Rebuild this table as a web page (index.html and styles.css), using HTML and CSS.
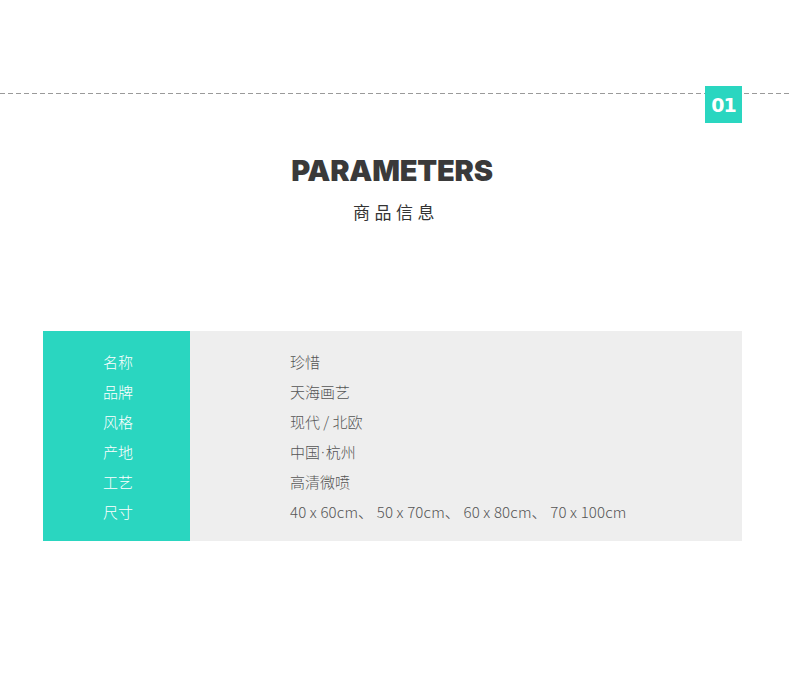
FILE: index.html
```html
<!DOCTYPE html>
<html lang="zh-CN">
<head>
<meta charset="utf-8">
<title>Parameters</title>
<link rel="stylesheet" href="styles.css">
</head>
<body>
<div class="page">
  <div class="rule">
    <div class="badge">01</div>
  </div>
  <div class="heading">
    <h1 class="title">PARAMETERS</h1>
    <p class="subtitle">商品信息</p>
  </div>
  <div class="table">
    <div class="labels">
      <div class="cell">名称</div>
      <div class="cell">品牌</div>
      <div class="cell">风格</div>
      <div class="cell">产地</div>
      <div class="cell">工艺</div>
      <div class="cell">尺寸</div>
    </div>
    <div class="values">
      <div class="cell">珍惜</div>
      <div class="cell">天海画艺</div>
      <div class="cell">现代 / 北欧</div>
      <div class="cell">中国<span class="dot">·</span>杭州</div>
      <div class="cell">高清微喷</div>
      <div class="cell sizes">40 x 60cm、 50 x 70cm、 60 x 80cm、 70 x 100cm</div>
    </div>
  </div>
</div>
</body>
</html>
```

FILE: styles.css
```css
* { box-sizing: border-box; }
html, body { margin: 0; padding: 0; background: #fff; }
body {
  font-family: "Noto Sans CJK SC", sans-serif;
  width: 790px;
  height: 694px;
  overflow: hidden;
}
.page { padding-top: 93px; }
.rule {
  position: relative;
  height: 1px;
  background-image: linear-gradient(to right, #9a9a9a 0 5px, transparent 5px 8px);
  background-size: 8px 1px;
  background-repeat: repeat-x;
}
.badge {
  position: absolute;
  left: 705px;
  top: -7px;
  width: 37px;
  height: 37px;
  background: #2ad6c0;
  color: #fff;
  font-family: "DejaVu Sans", sans-serif;
  font-weight: 700;
  font-size: 19px;
  letter-spacing: -1px;
  display: flex;
  align-items: center;
  justify-content: center;
}
.heading {
  display: flex;
  flex-direction: column;
  align-items: center;
  padding: 57px 6px 0 0;
}
.title {
  margin: 0;
  font-family: "Inter", sans-serif;
  font-weight: 900;
  font-size: 29px;
  line-height: 40px;
  letter-spacing: -0.2px;
  color: #3a3a3a;
}
.subtitle {
  margin: 9px 0 0 0;
  padding-left: 8px;
  font-family: "Noto Sans CJK SC", sans-serif;
  font-size: 17px;
  line-height: 24px;
  letter-spacing: 4.5px;
  color: #333;
}
.table {
  margin: 107px 0 0 43px;
  width: 699px;
  height: 210px;
  display: flex;
  background: #eeeeee;
}
.labels {
  width: 147px;
  background: #2ad6c0;
  color: #fff;
  text-align: center;
  padding: 16px 0 0 3px;
}
.values {
  flex: 1;
  padding: 16px 0 0 100px;
  color: #555;
}
.cell {
  height: 30px;
  line-height: 30px;
  font-size: 15px;
  font-family: "Noto Sans CJK SC", sans-serif;
  font-weight: 300;
  white-space: nowrap;
}
.dot {
  font-family: "Noto Sans", sans-serif;
  padding: 0 1px;
}
.sizes { letter-spacing: 0.16px; }
```
